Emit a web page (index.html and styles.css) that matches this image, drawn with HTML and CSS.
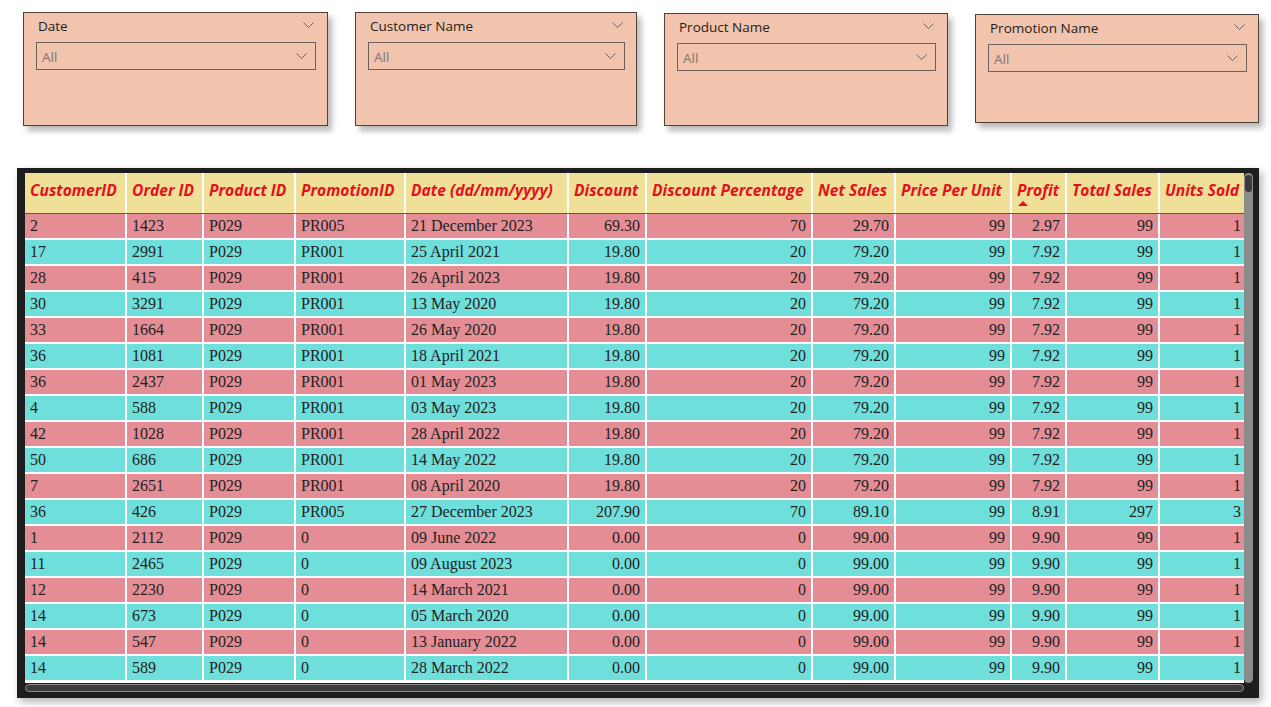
FILE: index.html
```html
<!DOCTYPE html>
<html>
<head>
<meta charset="utf-8">
<link rel="stylesheet" href="styles.css">
</head>
<body>
<div class="slicers">
  <div class="slicer s-date">
    <div class="slicer-head"><span class="slicer-title">Date</span><svg class="chev" width="11" height="6" viewBox="0 0 11 6"><polyline points="0.5,0.5 5.5,5.5 10.5,0.5"/></svg></div>
    <div class="dropdown"><span>All</span><svg class="chev" width="11" height="6" viewBox="0 0 11 6"><polyline points="0.5,0.5 5.5,5.5 10.5,0.5"/></svg></div>
  </div>
  <div class="slicer s-cust">
    <div class="slicer-head"><span class="slicer-title">Customer Name</span><svg class="chev" width="11" height="6" viewBox="0 0 11 6"><polyline points="0.5,0.5 5.5,5.5 10.5,0.5"/></svg></div>
    <div class="dropdown"><span>All</span><svg class="chev" width="11" height="6" viewBox="0 0 11 6"><polyline points="0.5,0.5 5.5,5.5 10.5,0.5"/></svg></div>
  </div>
  <div class="slicer s-prod">
    <div class="slicer-head"><span class="slicer-title">Product Name</span><svg class="chev" width="11" height="6" viewBox="0 0 11 6"><polyline points="0.5,0.5 5.5,5.5 10.5,0.5"/></svg></div>
    <div class="dropdown"><span>All</span><svg class="chev" width="11" height="6" viewBox="0 0 11 6"><polyline points="0.5,0.5 5.5,5.5 10.5,0.5"/></svg></div>
  </div>
  <div class="slicer s-promo">
    <div class="slicer-head"><span class="slicer-title">Promotion Name</span><svg class="chev" width="11" height="6" viewBox="0 0 11 6"><polyline points="0.5,0.5 5.5,5.5 10.5,0.5"/></svg></div>
    <div class="dropdown"><span>All</span><svg class="chev" width="11" height="6" viewBox="0 0 11 6"><polyline points="0.5,0.5 5.5,5.5 10.5,0.5"/></svg></div>
  </div>
</div>

<div class="frame">
  <div class="frame-main">
    <div class="table">
      <div class="row head">
        <div class="h">CustomerID</div>
        <div class="h">Order ID</div>
        <div class="h">Product ID</div>
        <div class="h">PromotionID</div>
        <div class="h">Date (dd/mm/yyyy)</div>
        <div class="h">Discount</div>
        <div class="h">Discount Percentage</div>
        <div class="h">Net Sales</div>
        <div class="h">Price Per Unit</div>
        <div class="h sorted">Profit<span class="sort-arrow"></span></div>
        <div class="h">Total Sales</div>
        <div class="h">Units Sold</div>
      </div>
      <div class="row pink"><div class="c">2</div><div class="c">1423</div><div class="c">P029</div><div class="c">PR005</div><div class="c">21 December 2023</div><div class="c r">69.30</div><div class="c r">70</div><div class="c r">29.70</div><div class="c r">99</div><div class="c r">2.97</div><div class="c r">99</div><div class="c r">1</div></div>
      <div class="row cyan"><div class="c">17</div><div class="c">2991</div><div class="c">P029</div><div class="c">PR001</div><div class="c">25 April 2021</div><div class="c r">19.80</div><div class="c r">20</div><div class="c r">79.20</div><div class="c r">99</div><div class="c r">7.92</div><div class="c r">99</div><div class="c r">1</div></div>
      <div class="row pink"><div class="c">28</div><div class="c">415</div><div class="c">P029</div><div class="c">PR001</div><div class="c">26 April 2023</div><div class="c r">19.80</div><div class="c r">20</div><div class="c r">79.20</div><div class="c r">99</div><div class="c r">7.92</div><div class="c r">99</div><div class="c r">1</div></div>
      <div class="row cyan"><div class="c">30</div><div class="c">3291</div><div class="c">P029</div><div class="c">PR001</div><div class="c">13 May 2020</div><div class="c r">19.80</div><div class="c r">20</div><div class="c r">79.20</div><div class="c r">99</div><div class="c r">7.92</div><div class="c r">99</div><div class="c r">1</div></div>
      <div class="row pink"><div class="c">33</div><div class="c">1664</div><div class="c">P029</div><div class="c">PR001</div><div class="c">26 May 2020</div><div class="c r">19.80</div><div class="c r">20</div><div class="c r">79.20</div><div class="c r">99</div><div class="c r">7.92</div><div class="c r">99</div><div class="c r">1</div></div>
      <div class="row cyan"><div class="c">36</div><div class="c">1081</div><div class="c">P029</div><div class="c">PR001</div><div class="c">18 April 2021</div><div class="c r">19.80</div><div class="c r">20</div><div class="c r">79.20</div><div class="c r">99</div><div class="c r">7.92</div><div class="c r">99</div><div class="c r">1</div></div>
      <div class="row pink"><div class="c">36</div><div class="c">2437</div><div class="c">P029</div><div class="c">PR001</div><div class="c">01 May 2023</div><div class="c r">19.80</div><div class="c r">20</div><div class="c r">79.20</div><div class="c r">99</div><div class="c r">7.92</div><div class="c r">99</div><div class="c r">1</div></div>
      <div class="row cyan"><div class="c">4</div><div class="c">588</div><div class="c">P029</div><div class="c">PR001</div><div class="c">03 May 2023</div><div class="c r">19.80</div><div class="c r">20</div><div class="c r">79.20</div><div class="c r">99</div><div class="c r">7.92</div><div class="c r">99</div><div class="c r">1</div></div>
      <div class="row pink"><div class="c">42</div><div class="c">1028</div><div class="c">P029</div><div class="c">PR001</div><div class="c">28 April 2022</div><div class="c r">19.80</div><div class="c r">20</div><div class="c r">79.20</div><div class="c r">99</div><div class="c r">7.92</div><div class="c r">99</div><div class="c r">1</div></div>
      <div class="row cyan"><div class="c">50</div><div class="c">686</div><div class="c">P029</div><div class="c">PR001</div><div class="c">14 May 2022</div><div class="c r">19.80</div><div class="c r">20</div><div class="c r">79.20</div><div class="c r">99</div><div class="c r">7.92</div><div class="c r">99</div><div class="c r">1</div></div>
      <div class="row pink"><div class="c">7</div><div class="c">2651</div><div class="c">P029</div><div class="c">PR001</div><div class="c">08 April 2020</div><div class="c r">19.80</div><div class="c r">20</div><div class="c r">79.20</div><div class="c r">99</div><div class="c r">7.92</div><div class="c r">99</div><div class="c r">1</div></div>
      <div class="row cyan"><div class="c">36</div><div class="c">426</div><div class="c">P029</div><div class="c">PR005</div><div class="c">27 December 2023</div><div class="c r">207.90</div><div class="c r">70</div><div class="c r">89.10</div><div class="c r">99</div><div class="c r">8.91</div><div class="c r">297</div><div class="c r">3</div></div>
      <div class="row pink"><div class="c">1</div><div class="c">2112</div><div class="c">P029</div><div class="c">0</div><div class="c">09 June 2022</div><div class="c r">0.00</div><div class="c r">0</div><div class="c r">99.00</div><div class="c r">99</div><div class="c r">9.90</div><div class="c r">99</div><div class="c r">1</div></div>
      <div class="row cyan"><div class="c">11</div><div class="c">2465</div><div class="c">P029</div><div class="c">0</div><div class="c">09 August 2023</div><div class="c r">0.00</div><div class="c r">0</div><div class="c r">99.00</div><div class="c r">99</div><div class="c r">9.90</div><div class="c r">99</div><div class="c r">1</div></div>
      <div class="row pink"><div class="c">12</div><div class="c">2230</div><div class="c">P029</div><div class="c">0</div><div class="c">14 March 2021</div><div class="c r">0.00</div><div class="c r">0</div><div class="c r">99.00</div><div class="c r">99</div><div class="c r">9.90</div><div class="c r">99</div><div class="c r">1</div></div>
      <div class="row cyan"><div class="c">14</div><div class="c">673</div><div class="c">P029</div><div class="c">0</div><div class="c">05 March 2020</div><div class="c r">0.00</div><div class="c r">0</div><div class="c r">99.00</div><div class="c r">99</div><div class="c r">9.90</div><div class="c r">99</div><div class="c r">1</div></div>
      <div class="row pink"><div class="c">14</div><div class="c">547</div><div class="c">P029</div><div class="c">0</div><div class="c">13 January 2022</div><div class="c r">0.00</div><div class="c r">0</div><div class="c r">99.00</div><div class="c r">99</div><div class="c r">9.90</div><div class="c r">99</div><div class="c r">1</div></div>
      <div class="row cyan"><div class="c">14</div><div class="c">589</div><div class="c">P029</div><div class="c">0</div><div class="c">28 March 2022</div><div class="c r">0.00</div><div class="c r">0</div><div class="c r">99.00</div><div class="c r">99</div><div class="c r">9.90</div><div class="c r">99</div><div class="c r">1</div></div>
    </div>
    <div class="vscroll"><div class="vthumb"></div></div>
  </div>
  <div class="hscroll"></div>
</div>
</body>
</html>
```
FILE: styles.css
```css
html, body {
  margin: 0;
  padding: 0;
  background: #ffffff;
}

body {
  font-family: "Open Sans", "Noto Sans", sans-serif;
  width: 1271px;
  height: 707px;
  overflow: hidden;
}

/* ---------- slicers ---------- */
.slicers {
  display: flex;
  align-items: flex-start;
  padding-left: 23px;
  height: 126px;
}

.slicer {
  box-sizing: border-box;
  background: #f2c3ad;
  border: 1px solid #4f423d;
  box-shadow: 4px 5px 6px rgba(0, 0, 0, 0.28);
  padding: 4px 11px 0 12px;
}

.s-date  { width: 305px; height: 114px; margin-top: 12px; }
.s-cust  { width: 282px; height: 114px; margin-top: 12px; margin-left: 27px; }
.s-prod  { width: 284px; height: 113px; margin-top: 13px; margin-left: 27px; }
.s-promo { width: 284px; height: 109px; margin-top: 14px; margin-left: 27px; }

.slicer-head {
  display: flex;
  align-items: center;
  justify-content: space-between;
  height: 18px;
  padding-left: 2px;
  padding-right: 2px;
}

.slicer-title {
  font-size: 13.5px;
  font-weight: 500;
  color: #1f1e1d;
}

.chev {
  display: block;
  fill: none;
  stroke: #6b6461;
  stroke-width: 1;
}

.slicer-head .chev {
  margin-top: -2px;
}

.dropdown {
  box-sizing: border-box;
  margin-top: 7px;
  height: 28px;
  border: 1.5px solid #6f605a;
  display: flex;
  align-items: center;
  justify-content: space-between;
  padding: 0 8px 0 5px;
  font-size: 13.5px;
  color: #7d7672;
}

.dropdown span {
  margin-top: 2px;
}

/* ---------- table frame ---------- */
.frame {
  box-sizing: border-box;
  margin-top: 42px;
  margin-left: 17px;
  width: 1242px;
  height: 530px;
  background: #1d1d1d;
  padding: 5px 6px 6px 8px;
  box-shadow: 3px 4px 8px rgba(0, 0, 0, 0.3);
}

.frame-main {
  display: flex;
  height: 510px;
}

.table {
  width: 1219px;
  background: #ffffff;
}

.row {
  display: grid;
  grid-template-columns: 102px 77px 92px 110px 163px 78px 166px 83px 116px 55px 93px 84px;
}

.row > div {
  box-sizing: border-box;
  border-right: 2px solid #ffffff;
  white-space: nowrap;
  overflow: hidden;
}

.row > div:last-child {
  border-right: none;
}

.head {
  background: #efdf97;
  border-bottom: 1px solid #5e5a48;
}

.h {
  position: relative;
  height: 40px;
  padding: 7px 0 0 5px;
  line-height: 20px;
  font-family: "Open Sans", "Noto Sans", sans-serif;
  font-weight: 700;
  font-style: italic;
  font-size: 15.6px;
  color: #e3111d;
}

.sort-arrow {
  position: absolute;
  left: 6px;
  top: 28px;
  width: 0;
  height: 0;
  border-left: 5px solid transparent;
  border-right: 5px solid transparent;
  border-bottom: 5px solid #e3111d;
}

.c {
  height: 26px;
  border-bottom: 2px solid #ffffff;
  padding: 0 5px;
  font-family: "Liberation Serif", "Times New Roman", serif;
  font-size: 16px;
  line-height: 24px;
  color: #222222;
}

.c.r {
  text-align: right;
}

.row > .c:last-child {
  padding-right: 3px;
}

.pink { background: #e58d94; }
.cyan { background: #6fdfdc; }

/* ---------- scrollbars ---------- */
.vscroll {
  width: 9px;
  height: 510px;
  background: #8b8b8b;
  border-radius: 5px;
  display: flex;
  justify-content: center;
  padding-top: 2px;
  box-sizing: border-box;
}

.vthumb {
  width: 7px;
  height: 17px;
  background: #3a3a3a;
  border-radius: 4px;
}

.hscroll {
  box-sizing: border-box;
  margin-top: 1px;
  width: 1219px;
  height: 8px;
  background: #3c3c3c;
  border: 1px solid #8a8a8a;
  border-radius: 5px;
}
```
